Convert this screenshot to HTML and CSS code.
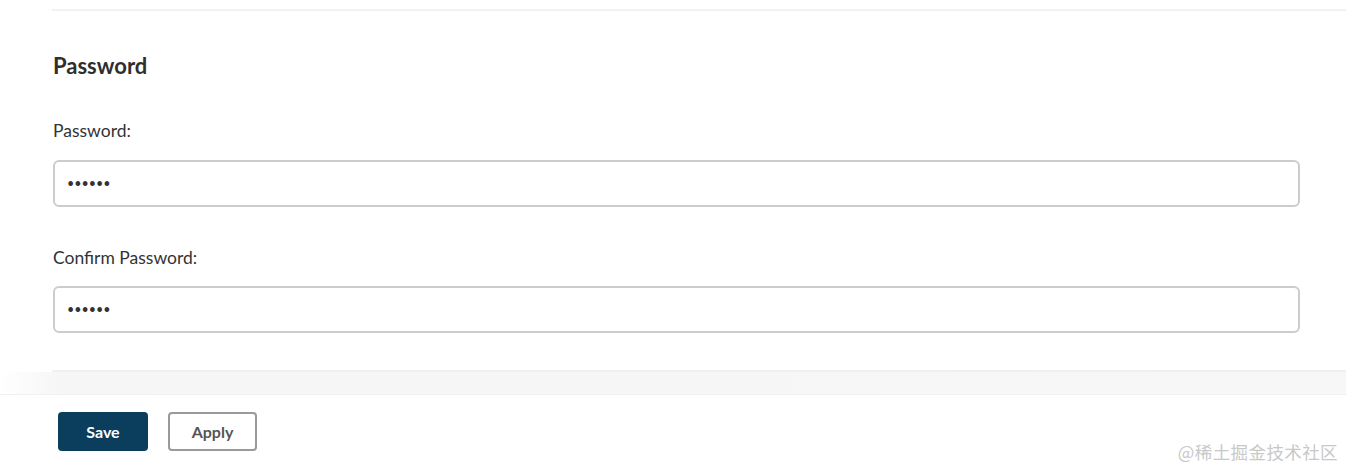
FILE: index.html
```html
<!DOCTYPE html>
<html>
<head>
<meta charset="utf-8">
<link rel="stylesheet" href="styles.css">
</head>
<body>
<div class="page">
  <div class="rule-top"></div>
  <section class="section">
    <h2 class="section-title">Password</h2>
    <div class="field">
      <label class="field-label" for="pw">Password:</label>
      <input class="field-input" id="pw" type="password" value="123456">
    </div>
    <div class="field field-second">
      <label class="field-label" for="pw2">Confirm Password:</label>
      <input class="field-input" id="pw2" type="password" value="123456">
    </div>
  </section>
  <div class="rule-bottom"></div>
  <div class="shade"></div>
  <footer class="footer">
    <button class="btn btn-primary" type="button">Save</button>
    <button class="btn btn-secondary" type="button">Apply</button>
  </footer>
  <div class="watermark">@稀土掘金技术社区</div>
</div>
</body>
</html>
```
FILE: styles.css
```css
html, body {
  margin: 0;
  padding: 0;
  background: #ffffff;
}
body {
  font-family: Lato, "Noto Sans", "Liberation Sans", sans-serif;
  color: #333333;
  width: 1346px;
  height: 468px;
  overflow: hidden;
}
.page {
  position: relative;
  box-sizing: border-box;
  height: 468px;
  padding-top: 9px;
}
.rule-top {
  margin: 0 0 0 52px;
  height: 2px;
  background: #f2f2f2;
}
.section {
  padding: 0 0 0 53px;
}
.section-title {
  margin: 42px 0 0 0;
  font-size: 22px;
  line-height: 26px;
  font-weight: 700;
  color: #2f2f2f;
}
.field {
  display: flex;
  flex-direction: column;
  margin-top: 41px;
}
.field-second {
  margin-top: 40px;
}
.field-label {
  font-size: 17.5px;
  line-height: 22px;
  color: #333333;
  margin-bottom: 18px;
}
.field-second .field-label {
  margin-bottom: 17px;
}
.field-input {
  box-sizing: border-box;
  width: 1247px;
  height: 47px;
  margin: 0;
  border: 2px solid #cccccc;
  border-radius: 6px;
  padding: 0 12px;
  font-family: Lato, "Noto Sans", sans-serif;
  font-size: 12.5px;
  color: #333333;
  background: #ffffff;
  outline: none;
}
.rule-bottom {
  margin: 37px 0 0 52px;
  height: 2px;
  background: #f0f0f0;
}
.shade {
  height: 22px;
  margin-left: 0;
  background: linear-gradient(to right, rgba(246,246,246,0), #f6f6f6 60px, #f7f7f7);
  border-bottom: 1px solid #f1f1f1;
}
.footer {
  display: flex;
  gap: 20px;
  padding: 17px 0 0 58px;
}
.btn {
  box-sizing: border-box;
  height: 39px;
  margin: 0;
  border-radius: 4px;
  font-family: Lato, "Noto Sans", sans-serif;
  font-size: 16px;
  font-weight: 700;
  cursor: pointer;
}
.btn-primary {
  width: 90px;
  background: #0b3d5d;
  border: none;
  color: #ffffff;
}
.btn-secondary {
  width: 89px;
  background: #ffffff;
  border: 2px solid #9a9a9a;
  color: #555555;
}
.watermark {
  position: absolute;
  right: 8px;
  bottom: 6px;
  font-family: "Noto Sans CJK SC", "Noto Sans", sans-serif;
  font-size: 17.5px;
  line-height: 20px;
  color: #c8c8c8;
  letter-spacing: 0.4px;
}
```
